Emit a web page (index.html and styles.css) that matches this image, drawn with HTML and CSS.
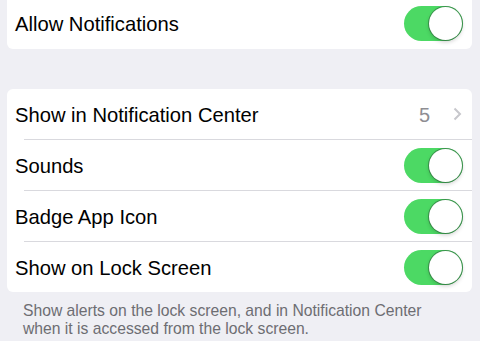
FILE: index.html
```html
<!DOCTYPE html>
<html lang="en">
<head>
    <meta charset="UTF-8">
    <meta name="viewport" content="width=device-width, initial-scale=1.0">
    <title>Notifications</title>

    <link rel="stylesheet" href="styles.css">
</head>
<body>

<div class="settings">
    <!-- Allow group -->
    <div class="group group-top">
        <div class="row">
            <span class="label">Allow Notifications</span>
            <div class="switch"><div class="knob"></div></div>
        </div>
    </div>

    <!-- Display group -->
    <div class="group">
        <div class="row">
            <span class="label">Show in Notification Center</span>
            <div class="detail">
                <span class="count">5</span>
                <svg class="chevron" width="9" height="14" viewBox="0 0 9 14">
                    <polyline points="1.5,1.5 7,7 1.5,12.5" fill="none" stroke="#c7c7cc" stroke-width="2"/>
                </svg>
            </div>
        </div>
        <div class="sep"></div>
        <div class="row">
            <span class="label">Sounds</span>
            <div class="switch"><div class="knob"></div></div>
        </div>
        <div class="sep"></div>
        <div class="row">
            <span class="label">Badge App Icon</span>
            <div class="switch"><div class="knob"></div></div>
        </div>
        <div class="sep"></div>
        <div class="row">
            <span class="label">Show on Lock Screen</span>
            <div class="switch"><div class="knob"></div></div>
        </div>
    </div>

    <p class="footer-note">
        Show alerts on the lock screen, and in Notification Center
        <br>
        when it is accessed from the lock screen.
    </p>
</div>

</body>
</html>
```

FILE: styles.css
```css
body {
    margin: 0;
    background-color: #efeff4;
    font-family: "Liberation Sans", Arial, sans-serif;
    overflow: hidden;
}

.settings {
    padding: 0 8px 0 7px;
}

/* White rounded card */
.group {
    background-color: #fff;
    border-radius: 6px;
    margin-top: 40px;
}

.group-top {
    margin-top: -2px;
    border-radius: 0 0 6px 6px;
}

.row {
    height: 50px;
    display: flex;
    align-items: center;
    justify-content: space-between;
    padding: 0 9px 0 8px;
}

.group-top .row {
    height: 51px;
}

.label {
    font-size: 20.2px;
    color: #000;
    padding-top: 2px;
}

.sep {
    height: 1px;
    margin-left: 17px;
    background-color: #d9d9de;
}

/* Toggle */
.switch {
    width: 59px;
    height: 35px;
    border-radius: 18px;
    background-color: #4cd964;
    display: flex;
    justify-content: flex-end;
    align-items: center;
    padding: 0 1px;
    box-sizing: border-box;
}

.knob {
    width: 33px;
    height: 33px;
    border-radius: 50%;
    background-color: #fff;
    box-shadow: 0 0 0 1px rgba(40, 70, 50, 0.45), 0 2px 4px rgba(0, 0, 0, 0.2);
}

.detail {
    display: flex;
    align-items: center;
    padding-right: 1px;
}

.count {
    font-size: 20px;
    color: #8e8e93;
    padding-top: 2px;
}

.chevron {
    margin-left: 23px;
}

.footer-note {
    margin: 10px 0 0 16px;
    font-size: 15.7px;
    line-height: 18px;
    color: #6d6d72;
}
```
